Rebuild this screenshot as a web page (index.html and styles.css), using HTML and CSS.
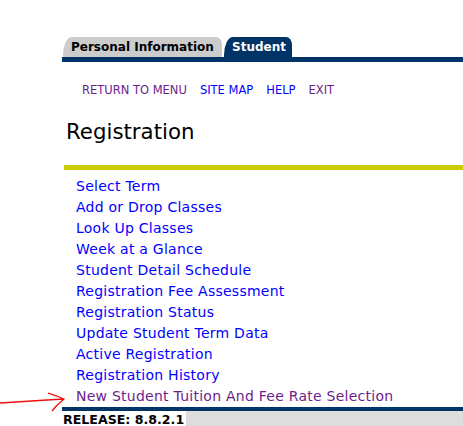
FILE: index.html
```html
<!DOCTYPE html>
<html lang="en">
<head>
  <meta charset="UTF-8">
  <title>Registration</title>
  <link rel="stylesheet" href="styles.css">
</head>
<body>
  <div class="tabs">
    <a class="tab tab-off" href="#">Personal Information</a>
    <a class="tab tab-on" href="#">Student</a>
  </div>

  <div class="menu">
    <a class="visited" href="#">RETURN TO MENU</a>
    <a href="#">SITE MAP</a>
    <a href="#">HELP</a>
    <a class="visited" href="#">EXIT</a>
  </div>

  <h2 class="title">Registration</h2>
  <div class="rule"></div>

  <ul class="links">
    <li><a href="#">Select Term</a></li>
    <li><a href="#">Add or Drop Classes</a></li>
    <li><a href="#">Look Up Classes</a></li>
    <li><a href="#">Week at a Glance</a></li>
    <li><a href="#">Student Detail Schedule</a></li>
    <li><a href="#">Registration Fee Assessment</a></li>
    <li><a href="#">Registration Status</a></li>
    <li><a href="#">Update Student Term Data</a></li>
    <li><a href="#">Active Registration</a></li>
    <li><a href="#">Registration History</a></li>
    <li><a class="visited" href="#">New Student Tuition And Fee Rate Selection</a></li>
  </ul>

  <div class="footer">
    <span class="release">RELEASE: 8.8.2.1</span>
    <span class="filler"></span>
  </div>

  <svg class="arrow" width="70" height="24" viewBox="0 0 70 24">
    <path d="M0 12 L63 8 M48 2 C55 4 60 6 64 8 C59 12 55 16 52 20" fill="none" stroke="#ee1111" stroke-width="1.3"/>
  </svg>
</body>
</html>
```

FILE: styles.css
```css
body { margin: 0; font-family: "DejaVu Sans", Verdana, sans-serif; background: #fff; color: #000; }
a { text-decoration: none; color: #0000ff; }
a.visited { color: #6b1e8c; }

.tabs { display: flex; gap: 2px; margin: 37px 0 0 62px; padding-left: 1px; border-bottom: 5px solid #003366; }
.tab { display: block; height: 20px; line-height: 20px; font-size: 12px; font-weight: bold; padding: 0 8px 0 8px; border-radius: 9px 6px 0 0 / 18px 8px 0 0; }
.tab-off { background: #cccccc; color: #000; width: 143px; }
.tab-on { background: #003366; color: #fff; width: 52px; }

.menu { display: flex; gap: 13px; margin: 21px 0 0 82px; font-size: 11.5px; }

.title { margin: 23px 0 0 66px; font-size: 21.3px; font-weight: normal; line-height: 24px; }

.rule { margin: 21px 0 0 64px; height: 5px; background: #cccc00; }

.links { list-style: none; margin: 6px 0 0 76px; padding: 0; font-size: 14px; line-height: 21px; letter-spacing: 0.25px; }

.footer { display: flex; margin: 0 0 0 62px; border-top: 4px solid #003366; height: 18px; }
.release { font-size: 12.6px; font-weight: bold; line-height: 15px; padding: 1px 2px 0 1px; white-space: nowrap; }
.filler { flex: 1; background: #dddddd; }

.arrow { position: absolute; left: 0; top: 391px; }
```
